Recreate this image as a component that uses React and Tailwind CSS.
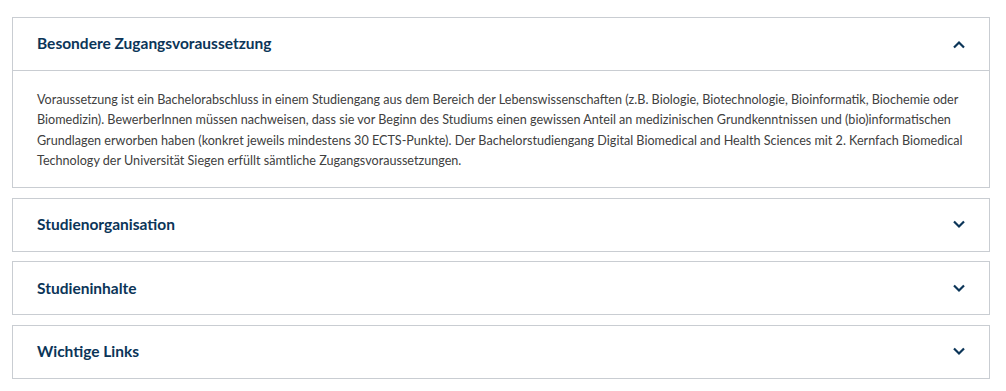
import React from "react";

const Chevron = ({ up }) => (
  <svg width="14" height="9" viewBox="0 0 14 9" className="block">
    <path
      d={up ? "M2 7.5 L7 2.5 L12 7.5" : "M2 1.5 L7 6.5 L12 1.5"}
      fill="none"
      stroke="#0b3558"
      strokeWidth="2.2"
      strokeLinecap="butt"
      strokeLinejoin="miter"
    />
  </svg>
);

const Item = ({ title, open, children }) => (
  <div className="border border-[#c9cdd2] bg-white">
    <div className="h-[52px] flex items-center justify-between pl-[24px] pr-[23px]">
      <span className="text-[15.5px] font-bold text-[#0b3558]">{title}</span>
      <Chevron up={open} />
    </div>
    {open && (
      <div className="border-t border-[#c9cdd2] pl-[24px] pr-[24px] pt-[19px] pb-[16px] text-[12.6px] leading-[20.3px] text-[#404040]">
        {children}
      </div>
    )}
  </div>
);

export default function App() {
  return (
    <div
      className="w-[1006px] h-[391px] bg-white pt-[17px] pl-[12px] pr-[16px]"
      style={{ fontFamily: "Lato, 'Open Sans', sans-serif" }}
    >
      <div className="flex flex-col gap-[9.5px]">
        <Item title="Besondere Zugangsvoraussetzung" open>
          <span className="block whitespace-nowrap">
            Voraussetzung ist ein Bachelorabschluss in einem Studiengang aus dem Bereich der Lebenswissenschaften (z.B. Biologie, Biotechnologie, Bioinformatik, Biochemie oder
          </span>
          <span className="block whitespace-nowrap">
            Biomedizin). BewerberInnen müssen nachweisen, dass sie vor Beginn des Studiums einen gewissen Anteil an medizinischen Grundkenntnissen und (bio)informatischen
          </span>
          <span className="block whitespace-nowrap">
            Grundlagen erworben haben (konkret jeweils mindestens 30 ECTS-Punkte). Der Bachelorstudiengang Digital Biomedical and Health Sciences mit 2. Kernfach Biomedical
          </span>
          <span className="block whitespace-nowrap">
            Technology der Universität Siegen erfüllt sämtliche Zugangsvoraussetzungen.
          </span>
        </Item>
        <Item title="Studienorganisation" />
        <Item title="Studieninhalte" />
        <Item title="Wichtige Links" />
      </div>
    </div>
  );
}
